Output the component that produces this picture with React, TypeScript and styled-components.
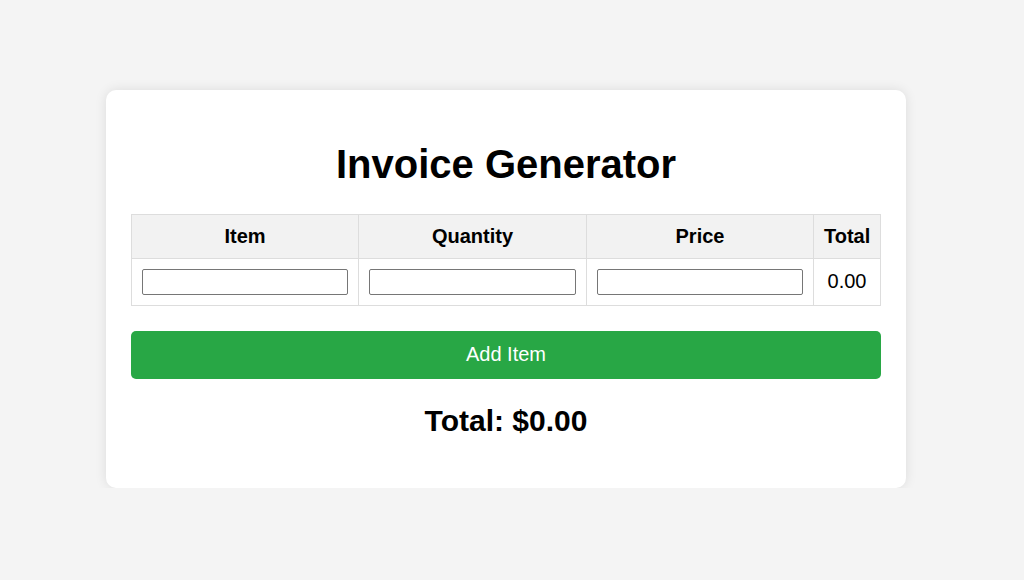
import React from "react";
import styled, { createGlobalStyle } from "styled-components";

const Global = createGlobalStyle`
  html, body { margin: 0; padding: 0; }
  body {
    background: #f4f4f4;
    font-family: "Liberation Sans", Arial, sans-serif;
    font-size: 20px;
    color: #000;
  }
`;

const Page = styled.div`
  width: 1012px;
  padding-top: 90px;
`;

const Card = styled.div`
  width: 800px;
  box-sizing: border-box;
  margin: 0 auto;
  padding: 25px;
  background: #fff;
  border-radius: 10px;
  box-shadow: 0 0 12px rgba(0, 0, 0, 0.1);
`;

const Title = styled.h1`
  font-size: 40px;
  font-weight: bold;
  text-align: center;
  margin: 26.8px 0;
`;

const Table = styled.table`
  width: 750px;
  border-collapse: collapse;
  table-layout: fixed;
`;

const Th = styled.th<{ $w: number }>`
  width: ${(p) => p.$w}px;
  border: 1px solid #ddd;
  background: #f2f2f2;
  padding: 10px;
  font-weight: bold;
  text-align: center;
  box-sizing: border-box;
`;

const Td = styled.td`
  border: 1px solid #ddd;
  padding: 10px;
  text-align: center;
  line-height: 23px;
`;

const Input = styled.input`
  display: block;
  width: 100%;
  height: 26px;
  box-sizing: border-box;
  border: 1px solid #767676;
  border-radius: 2px;
  padding: 0 3px;
  font-family: "Liberation Sans", Arial, sans-serif;
  font-size: 16px;
  background: #fff;
`;

const AddButton = styled.button`
  display: block;
  width: 100%;
  margin-top: 25px;
  height: 48px;
  border: none;
  border-radius: 5px;
  background: #28a745;
  color: #fff;
  font-family: "Liberation Sans", Arial, sans-serif;
  font-size: 20px;
  cursor: pointer;
`;

const GrandTotal = styled.h2`
  font-size: 30px;
  font-weight: bold;
  text-align: center;
  margin: 25.5px 0 24.9px;
`;

export default function App() {
  return (
    <>
      <Global />
      <Page>
        <Card>
          <Title>Invoice Generator</Title>
          <Table>
            <thead>
              <tr>
                <Th $w={227}>Item</Th>
                <Th $w={228}>Quantity</Th>
                <Th $w={227}>Price</Th>
                <Th $w={67}>Total</Th>
              </tr>
            </thead>
            <tbody>
              <tr>
                <Td><Input type="text" /></Td>
                <Td><Input type="number" /></Td>
                <Td><Input type="number" /></Td>
                <Td>0.00</Td>
              </tr>
            </tbody>
          </Table>
          <AddButton>Add Item</AddButton>
          <GrandTotal>Total: $0.00</GrandTotal>
        </Card>
      </Page>
    </>
  );
}
